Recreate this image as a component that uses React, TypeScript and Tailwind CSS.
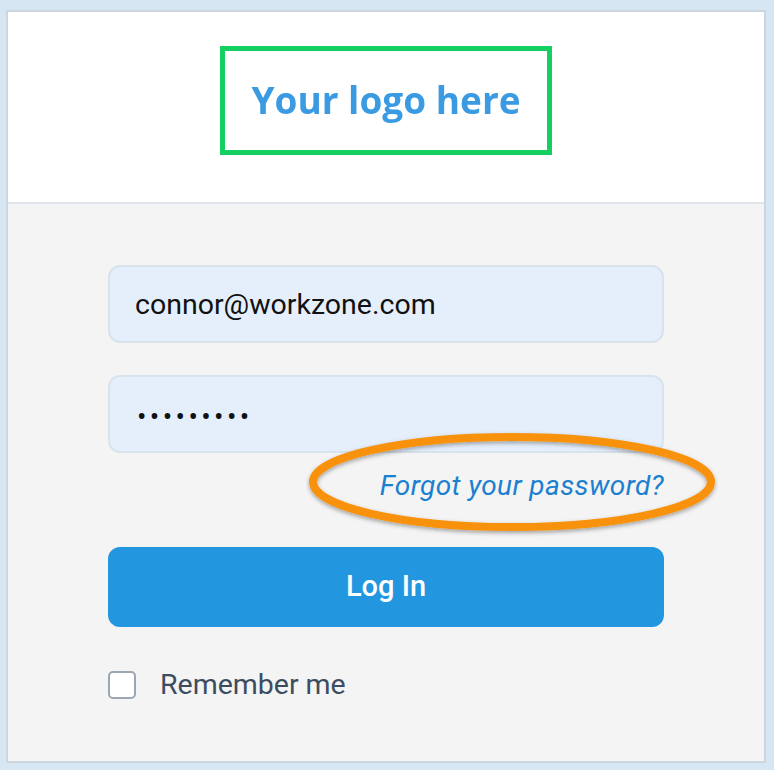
import React from "react";

export default function App() {
  return (
    <div
      className="w-[774px] h-[770px] bg-[#d6e6f2] pl-[6px] pt-[10px]"
      style={{ fontFamily: "Roboto, 'Liberation Sans', sans-serif" }}
    >
      <div className="w-[760px] h-[753px] border-2 border-[#cdd6de] bg-[#f4f4f4] flex flex-col">
        <div className="h-[192px] bg-white border-b-2 border-[#dfe5ea] flex items-center justify-center">
          <div className="w-[332px] h-[109px] border-[5px] border-[#14d062] flex items-center justify-center mb-[14px]">
            <span
              className="text-[37px] font-bold text-[#3b9be2] tracking-[0px]"
              style={{ fontFamily: "'Open Sans', Lato, sans-serif", filter: "blur(0.5px)" }}
            >
              Your logo here
            </span>
          </div>
        </div>
        <div className="px-[100px] pt-[61px] flex flex-col relative">
          <div className="h-[78px] rounded-[12px] bg-[#e5effc] border-2 border-[#d9e3ec] flex items-center pl-[25px] pt-[3px]">
            <span className="text-[28.5px] text-[#111]">connor@workzone.com</span>
          </div>
          <div className="h-[78px] mt-[32px] rounded-[12px] bg-[#e5effc] border-2 border-[#d9e3ec] flex items-center pl-[27px] pt-[6px]">
            <span className="text-[28px] text-[#111] tracking-[3.4px]">•••••••••</span>
          </div>
          <div className="flex justify-end mt-[16px] h-[32px] items-center pt-[2px]">
            <span className="italic text-[28px] text-[#1a80cf] tracking-[0.4px]">Forgot your password?</span>
          </div>
          <svg
            className="absolute left-[298px] top-[225px] pointer-events-none"
            width="412"
            height="108"
            viewBox="0 0 412 108"
          >
            <defs>
              <filter id="sh" x="-10%" y="-20%" width="120%" height="140%">
                <feDropShadow dx="0" dy="2" stdDeviation="2" floodColor="#000" floodOpacity="0.35" />
              </filter>
            </defs>
            <ellipse cx="206" cy="53" rx="199" ry="45" fill="none" stroke="#f8920d" strokeWidth="8" filter="url(#sh)" />
          </svg>
          <button className="h-[80px] mt-[46px] rounded-[12px] bg-[#2297e0] text-white text-[29px] font-medium">
            Log In
          </button>
          <div className="flex items-center mt-[37px]">
            <div className="w-[28px] h-[28px] rounded-[5px] border-2 border-[#9ba6b2] bg-white" />
            <span className="ml-[24px] text-[28.5px] text-[#3c4d61]">Remember me</span>
          </div>
        </div>
      </div>
    </div>
  );
}
